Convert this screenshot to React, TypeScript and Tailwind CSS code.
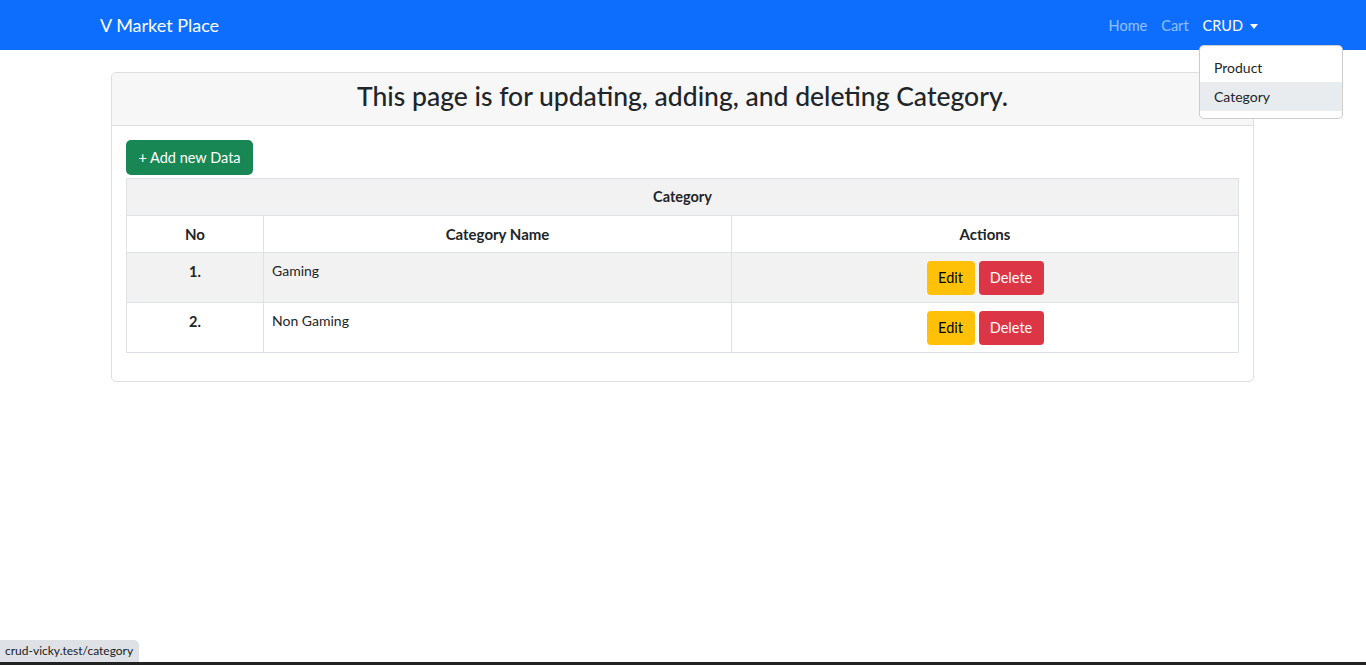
import React from 'react';

const rows = [
  { no: 1, name: 'Gaming' },
  { no: 2, name: 'Non Gaming' },
];

export default function App() {
  return (
    <div className="relative flex h-[665px] flex-col overflow-hidden bg-white font-['Lato','Liberation_Sans',sans-serif] text-[16px] text-[#212529]">
      {/* Navbar */}
      <nav className="relative h-[50px] shrink-0 bg-[#0d6efd]">
        <div className="flex h-full items-center pl-[100px] pr-[108px] pt-[1px]">
          <span className="text-[18px] text-white">V Market Place</span>
          <div className="ml-auto flex items-center gap-[14px] pt-[1px] text-[14.5px]">
            <span className="text-white/55">Home</span>
            <span className="text-white/55">Cart</span>
            <span className="flex items-center gap-[7px] text-white">
              CRUD
              <span className="mt-[1px] h-0 w-0 border-x-[4px] border-t-[5px] border-x-transparent border-t-white" />
            </span>
          </div>
        </div>
        {/* Dropdown menu */}
        <div className="absolute left-[1199px] top-[45px] z-10 w-[144px] rounded-[5px] border border-black/20 bg-white py-[7px] text-[14px]">
          <div className="h-[29px] px-[14px] leading-[29px]">Product</div>
          <div className="h-[29px] bg-[#e9ecef] px-[14px] leading-[29px]">Category</div>
        </div>
      </nav>

      {/* Content */}
      <main className="flex-1 pl-[111px] pr-[112px] pt-[22px]">
        <div className="rounded-[5px] border border-[#dfdfdf]">
          <div className="flex h-[53px] items-center justify-center rounded-t-[5px] border-b border-[#dfdfdf] bg-[#f7f7f7] pb-[5px]">
            <h3 className="text-[26.5px] font-medium">This page is for updating, adding, and deleting Category.</h3>
          </div>
          <div className="px-[14px] pb-[28px] pt-[14px]">
            <button className="flex h-[35px] w-[127px] items-center justify-center rounded-[5px] bg-[#198754] text-[14.5px] text-white">
              + Add new Data
            </button>
            <table className="mt-[3px] w-full border-collapse text-[14px]">
              <thead>
                <tr className="h-[37px] bg-[#f2f2f2]">
                  <th colSpan={3} className="border border-[#dee2e6] text-[14.5px] font-bold">Category</th>
                </tr>
                <tr className="h-[37px] text-[15px]">
                  <th className="w-[137px] border border-[#dee2e6] font-bold">No</th>
                  <th className="w-[468px] border border-[#dee2e6] font-bold">Category Name</th>
                  <th className="border border-[#dee2e6] font-bold">Actions</th>
                </tr>
              </thead>
              <tbody>
                {rows.map((r, i) => (
                  <tr key={r.no} className={`h-[50px] ${i % 2 === 0 ? 'bg-[#f2f2f2]' : 'bg-white'}`}>
                    <td className="border border-[#dee2e6] pt-[7px] text-center align-top text-[14.5px] font-bold leading-[24px]">{r.no}.</td>
                    <td className="border border-[#dee2e6] px-[8px] pt-[6px] align-top leading-[24px]">{r.name}</td>
                    <td className="border border-[#dee2e6] align-middle">
                      <div className="flex justify-center gap-[4px]">
                        <button className="h-[34px] w-[48px] rounded-[4px] bg-[#ffc107] text-[14.5px] text-black">Edit</button>
                        <button className="h-[34px] w-[65px] rounded-[4px] bg-[#dc3545] text-[14.5px] text-white">Delete</button>
                      </div>
                    </td>
                  </tr>
                ))}
              </tbody>
            </table>
          </div>
        </div>
      </main>

      {/* Browser status tooltip */}
      <div className="absolute bottom-[3px] left-0 z-10 flex h-[22px] w-[139px] items-center rounded-tr-[5px] bg-[#dee1e6] pl-[5px] text-[12px] text-[#202124]">
        crud-vicky.test/category
      </div>
      {/* Taskbar strip */}
      <div className="h-[3px] shrink-0 bg-[#222222]" />
    </div>
  );
}
